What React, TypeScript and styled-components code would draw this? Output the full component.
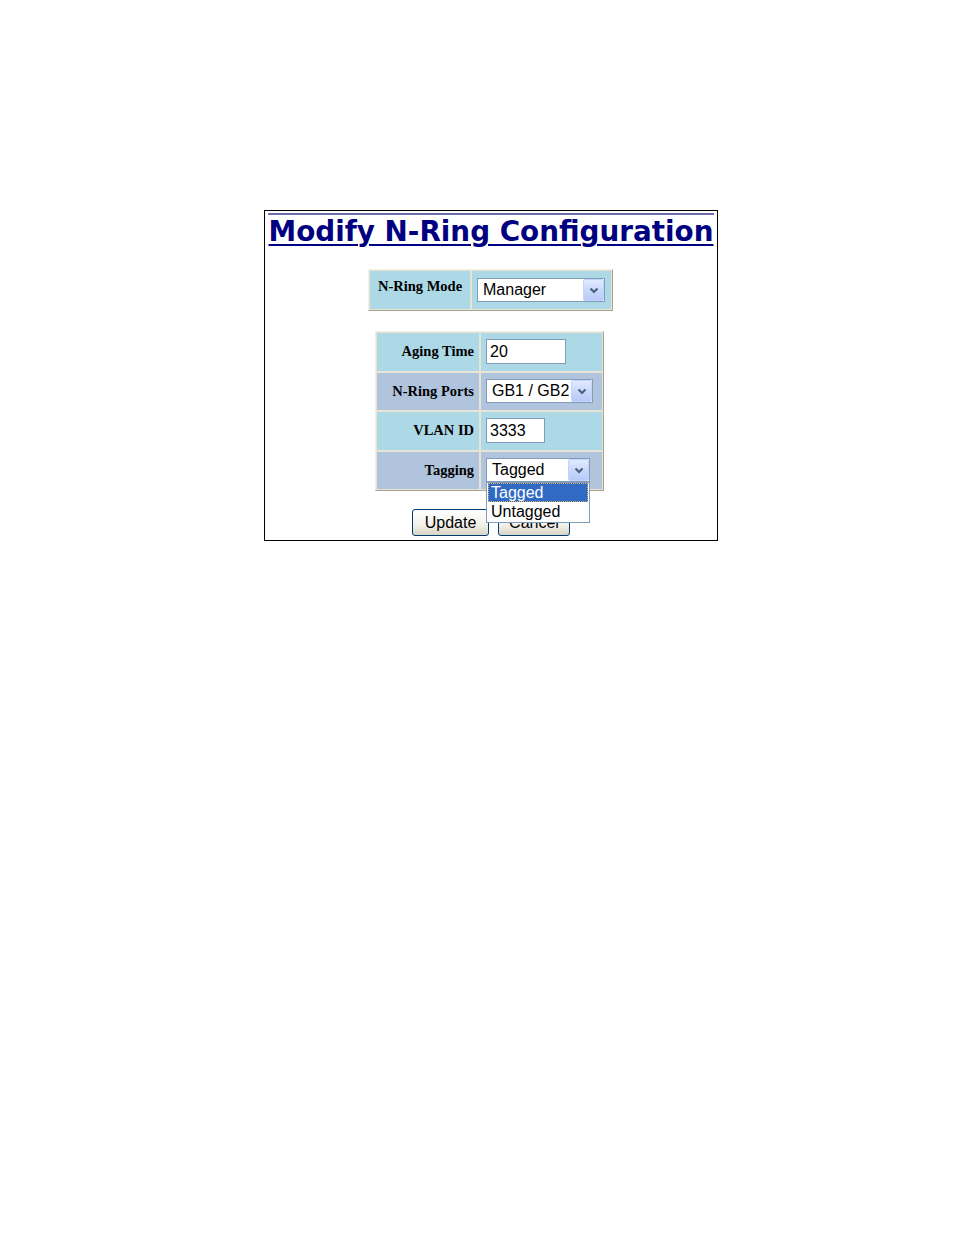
import React from "react";
import styled, { createGlobalStyle } from "styled-components";

const Global = createGlobalStyle`
  html, body { margin: 0; padding: 0; background: #ffffff; }
  body { font-family: "Liberation Serif", serif; }
`;

const Page = styled.div`
  padding: 210px 0 0 264px;
`;

const Frame = styled.div`
  box-sizing: border-box;
  width: 454px;
  height: 331px;
  border: 1px solid #000000;
  padding: 2px 3px 0 3px;
  display: flex;
  flex-direction: column;
  align-items: center;
`;

const Rule = styled.div`
  align-self: stretch;
  height: 2px;
  background: #6c6cae;
`;

const Title = styled.h1`
  margin: 0;
  font-family: "DejaVu Sans", Verdana, sans-serif;
  font-weight: bold;
  font-size: 27.8px;
  line-height: 33px;
  color: #000080;
  text-decoration: underline;
  text-decoration-thickness: 2px;
  text-underline-offset: 3px;
  white-space: nowrap;
`;

const Grid = styled.div<{ $cols: string; $rows: string; $mt: number; $mr?: number }>`
  margin-top: ${(p) => p.$mt}px;
  margin-right: ${(p) => p.$mr ?? 0}px;
  display: grid;
  grid-template-columns: ${(p) => p.$cols};
  grid-auto-rows: ${(p) => p.$rows};
  gap: 2px;
  padding: 1px;
  background: #e8e4d4;
  border: 1px solid;
  border-color: #f1efe6 #a8a390 #a8a390 #f1efe6;
`;

const Label = styled.div<{ $bg: string; $align: "center" | "right"; $top?: boolean }>`
  background: ${(p) => p.$bg};
  font-family: "Liberation Serif", "Times New Roman", serif;
  font-weight: bold;
  font-size: 14.5px;
  color: #000000;
  display: flex;
  align-items: ${(p) => (p.$top ? "flex-start" : "center")};
  justify-content: ${(p) => (p.$align === "center" ? "center" : "flex-end")};
  padding: ${(p) => (p.$top ? "7px 5px 0 5px" : "0 5px")};
  box-sizing: border-box;
`;

const Value = styled.div<{ $bg: string }>`
  background: ${(p) => p.$bg};
  display: flex;
  align-items: center;
  padding-left: 5px;
  box-sizing: border-box;
`;

const TextBox = styled.div<{ $w: number }>`
  box-sizing: border-box;
  width: ${(p) => p.$w}px;
  height: 25px;
  background: #ffffff;
  border: 1px solid #7f9db9;
  font-family: "Liberation Sans", Arial, sans-serif;
  font-size: 16px;
  line-height: 23px;
  padding-left: 3px;
  color: #000000;
`;

const SelectWrap = styled.div`
  position: relative;
`;

const SelectBox = styled.div<{ $w: number }>`
  box-sizing: border-box;
  width: ${(p) => p.$w}px;
  height: 24px;
  background: #ffffff;
  border: 1px solid #7f9db9;
  display: flex;
  align-items: center;
  padding: 0 0 0 1px;
  font-family: "Liberation Sans", Arial, sans-serif;
  font-size: 16px;
  color: #000000;
`;

const SelectText = styled.span`
  flex: 1;
  padding-left: 4px;
  white-space: nowrap;
  overflow: hidden;
`;

const ArrowBtn = styled.span`
  box-sizing: border-box;
  width: 21px;
  height: 22px;
  border: 1px solid #c3d3fd;
  border-radius: 2px;
  background: linear-gradient(#e1eafe, #c8d7fb 55%, #b7cbf8);
  display: flex;
  align-items: center;
  justify-content: center;
`;

const DropList = styled.div`
  position: absolute;
  left: 0;
  top: 24px;
  box-sizing: border-box;
  width: 104px;
  background: #ffffff;
  border: 1px solid #7f9db9;
  padding: 0 1px 1px 1px;
  font-family: "Liberation Sans", Arial, sans-serif;
  font-size: 16px;
  z-index: 2;
`;

const Option = styled.div<{ $sel?: boolean }>`
  height: 19px;
  line-height: 18px;
  padding-left: 2px;
  box-sizing: border-box;
  color: ${(p) => (p.$sel ? "#ffffff" : "#000000")};
  background: ${(p) => (p.$sel ? "#316ac5" : "#ffffff")};
  border: ${(p) => (p.$sel ? "1px dotted #e0b060" : "1px solid transparent")};
`;

const Buttons = styled.div`
  margin-top: 18px;
  display: flex;
  gap: 9px;
`;

const Button = styled.button<{ $w: number }>`
  box-sizing: border-box;
  width: ${(p) => p.$w}px;
  height: 27px;
  border: 1px solid #003c74;
  border-radius: 3px;
  background: linear-gradient(#ffffff, #f2f1ea 60%, #d8d4c4);
  font-family: "Liberation Sans", Arial, sans-serif;
  font-size: 16px;
  color: #000000;
  padding: 0;
`;

const Chevron = () => (
  <svg width="10" height="7" viewBox="0 0 10 7">
    <path d="M1.5 1.5 L5 5 L8.5 1.5" fill="none" stroke="#4d6185" strokeWidth="2.2" />
  </svg>
);

const Select = ({ w, text, children }: { w: number; text: string; children?: React.ReactNode }) => (
  <SelectWrap>
    <SelectBox $w={w}>
      <SelectText>{text}</SelectText>
      <ArrowBtn>
        <Chevron />
      </ArrowBtn>
    </SelectBox>
    {children}
  </SelectWrap>
);

const BLUE = "#add8e6";
const STEEL = "#b0c4de";

export default function App() {
  return (
    <Page>
      <Global />
      <Frame>
        <Rule />
        <Title>Modify N-Ring Configuration</Title>
        <Grid $cols="100px 139px" $rows="38px" $mt={21} $mr={1}>
          <Label $bg={BLUE} $align="center" $top>
            N-Ring Mode
          </Label>
          <Value $bg={BLUE}>
            <Select w={128} text="Manager" />
          </Value>
        </Grid>
        <Grid $cols="102px 121px" $rows="37.5px" $mt={20} $mr={3}>
          <Label $bg={BLUE} $align="right">Aging Time</Label>
          <Value $bg={BLUE}>
            <TextBox $w={80}>20</TextBox>
          </Value>
          <Label $bg={STEEL} $align="right">N-Ring Ports</Label>
          <Value $bg={STEEL}>
            <Select w={107} text="GB1 / GB2" />
          </Value>
          <Label $bg={BLUE} $align="right">VLAN ID</Label>
          <Value $bg={BLUE}>
            <TextBox $w={59}>3333</TextBox>
          </Value>
          <Label $bg={STEEL} $align="right">Tagging</Label>
          <Value $bg={STEEL}>
            <Select w={104} text="Tagged">
              <DropList>
                <Option $sel>Tagged</Option>
                <Option>Untagged</Option>
              </DropList>
            </Select>
          </Value>
        </Grid>
        <Buttons>
          <Button $w={77}>Update</Button>
          <Button $w={72}>Cancel</Button>
        </Buttons>
      </Frame>
    </Page>
  );
}
